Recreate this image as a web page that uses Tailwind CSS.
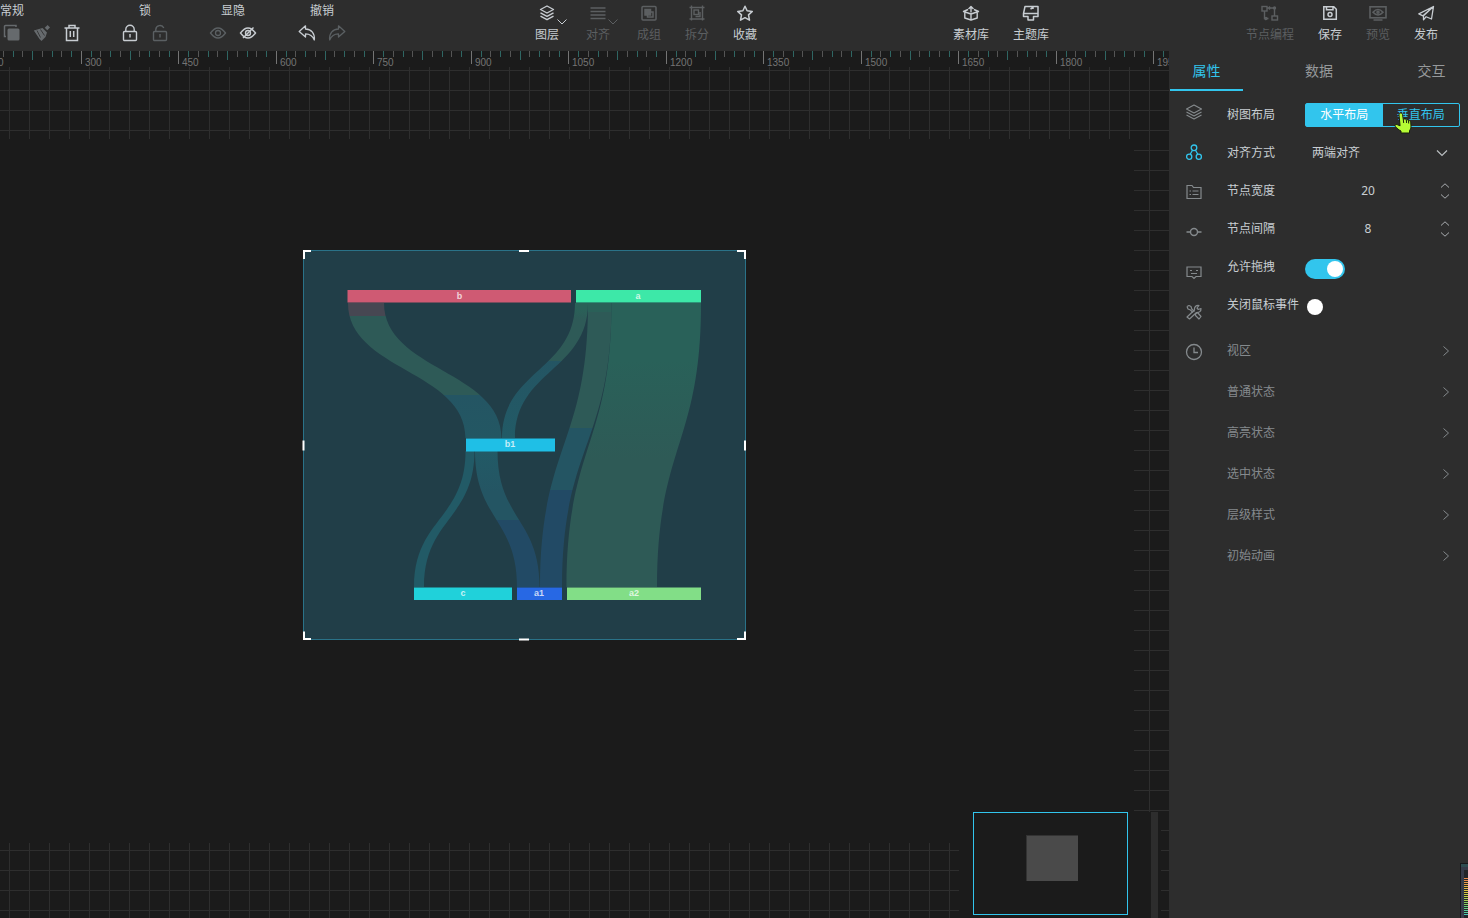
<!DOCTYPE html>
<html lang="zh-CN">
<head>
  <meta charset="UTF-8">
  <meta name="viewport" content="width=device-width, initial-scale=1.0">
  <title>大屏编辑器</title>
  <script src="https://cdn.jsdelivr.net/npm/@tailwindcss/browser@4"></script>
</head>
<body class="h-screen flex flex-col overflow-hidden bg-[#1b1b1b] text-xs text-[#c8cdd2] font-['Liberation_Sans','Noto_Sans_CJK_SC',sans-serif]">

  <!-- 顶部工具栏 -->
  <header class="h-[51px] shrink-0 flex bg-[#2d2d2d] overflow-hidden">
    <div class="flex gap-7 shrink-0 -ml-[63px]">
      <div class="w-[150px] flex flex-col items-center pt-[3px] gap-[5px]">
        <span class="leading-4">常规</span>
        <div class="w-full flex justify-end">
          <button class="w-[30px] h-[18px] grid place-items-center text-[#666a6d]" aria-label="复制">
            <svg class="w-[18px] h-[18px]" viewBox="0 0 18 18" fill="none"><path d="M13 3V1.500H2.500a1 1 0 0 0-1 1V12.500H3" stroke="currentColor" stroke-width="1.500"/><rect x="4.500" y="4.500" width="12" height="12" rx="1.500" fill="currentColor"/></svg>
          </button>
          <button class="w-[30px] h-[18px] grid place-items-center text-[#666a6d]" aria-label="清理">
            <svg class="w-[18px] h-[18px]" viewBox="0 0 18 18" fill="none"><path d="M.8 6.500 9.500 4l4.500 4.500-1.500 4.500-4 4-2-2z" fill="currentColor"/><path d="m13 5 2.800-2.800" stroke="currentColor" stroke-width="3.500"/><path d="m4 6.500 3.500 7M7.500 5.500l4 6" stroke="#2d2d2d" stroke-width=".8"/></svg>
          </button>
          <button class="w-[30px] h-[18px] grid place-items-center" aria-label="删除">
            <svg class="w-[18px] h-[18px]" viewBox="0 0 18 18" fill="none" stroke="currentColor" stroke-width="1.500"><path d="M1.500 4h15M6 3.500V1.500h6v2M3.500 4v12.500h11V4M7.300 7v6M10.700 7v6"/></svg>
          </button>
        </div>
      </div>
      <div class="flex flex-col items-center pt-[3px] gap-[5px]">
        <span class="leading-4">锁</span>
        <div class="flex">
          <button class="w-[30px] h-[18px] grid place-items-center" aria-label="锁定">
            <svg class="w-[18px] h-[18px]" viewBox="0 0 18 18" fill="none" stroke="currentColor" stroke-width="1.400"><rect x="2.500" y="7.500" width="13" height="9" rx="1"/><path d="M4.800 7V5.500a4.200 4.200 0 0 1 8.400 0V7M9 10v3.500"/></svg>
          </button>
          <button class="w-[30px] h-[18px] grid place-items-center text-[#5b6063]" aria-label="解锁">
            <svg class="w-[18px] h-[18px]" viewBox="0 0 18 18" fill="none" stroke="currentColor" stroke-width="1.400"><rect x="2.500" y="7.500" width="13" height="9" rx="1"/><path d="M4.800 7V5.500a4.200 4.200 0 0 1 8-1.500M9 10v3.500"/></svg>
          </button>
        </div>
      </div>
      <div class="flex flex-col items-center pt-[3px] gap-[5px]">
        <span class="leading-4">显隐</span>
        <div class="flex">
          <button class="w-[30px] h-[18px] grid place-items-center text-[#5b6063]" aria-label="显示">
            <svg class="w-[18px] h-[18px]" viewBox="0 0 18 18" fill="none" stroke="currentColor" stroke-width="1.300"><path d="M1.500 9q7.500-10 15 0q-7.500 10-15 0z"/><circle cx="9" cy="9" r="2.500"/></svg>
          </button>
          <button class="w-[30px] h-[18px] grid place-items-center" aria-label="隐藏">
            <svg class="w-[18px] h-[18px]" viewBox="0 0 18 18" fill="none" stroke="currentColor" stroke-width="1.400"><path d="M1.500 9q7.500-10 15 0q-7.500 10-15 0z"/><circle cx="9" cy="9" r="2.500"/><path d="M4 14 14.500 3.500"/></svg>
          </button>
        </div>
      </div>
      <div class="flex flex-col items-center pt-[3px] gap-[5px] pl-px">
        <span class="leading-4">撤销</span>
        <div class="flex">
          <button class="w-[30px] h-[18px] grid place-items-center" aria-label="撤销">
            <svg class="w-[18px] h-[18px]" viewBox="0 0 18 18" fill="none" stroke="currentColor" stroke-width="1.300" stroke-linejoin="round"><path d="M7.500 1.800 1.200 7.500l6.300 5.500V9.800c4.500 0 7 1.500 8.800 6.200C17 9.500 13.500 5.300 7.500 5z"/></svg>
          </button>
          <button class="w-[30px] h-[18px] grid place-items-center text-[#5b6063]" aria-label="重做">
            <svg class="w-[18px] h-[18px]" viewBox="0 0 18 18" fill="none" stroke="currentColor" stroke-width="1.300" stroke-linejoin="round"><path d="M10.500 1.800 16.800 7.500l-6.300 5.500V9.800c-4.500 0-7 1.500-8.800 6.200C1 9.500 4.500 5.300 10.500 5z"/></svg>
          </button>
        </div>
      </div>
    </div>

    <div class="flex gap-6 shrink-0 ml-[183px] pt-1">
      <button class="relative flex flex-col items-center gap-[5px] mr-[3px]">
        <svg class="w-[18px] h-[18px]" viewBox="0 0 18 18" fill="none" stroke="currentColor" stroke-width="1.400" stroke-linejoin="round"><path d="M9 2 15.500 5.500 9 9 2.500 5.500z"/><path d="M2.500 8.800 9 12.300l6.500-3.500M2.500 12.200 9 15.700l6.500-3.500"/></svg>
        <span class="leading-4">图层</span>
        <svg class="absolute left-[22px] top-[15px] w-2.5 h-1.5" viewBox="0 0 10 6" fill="none" stroke="currentColor"><path d="M.5.5 5 5 9.500.5"/></svg>
      </button>
      <button class="relative flex flex-col items-center gap-[5px] mr-[3px] text-[#5c5f61]">
        <svg class="w-[18px] h-[18px]" viewBox="0 0 18 18" fill="none" stroke="currentColor" stroke-width="1.500"><path d="M1.500 4h15M1.500 7.500h15M1.500 11h15M1.500 14.500h15"/></svg>
        <span class="leading-4">对齐</span>
        <svg class="absolute left-[22px] top-[15px] w-2.5 h-1.5" viewBox="0 0 10 6" fill="none" stroke="currentColor"><path d="M.5.5 5 5 9.500.5"/></svg>
      </button>
      <button class="flex flex-col items-center gap-[5px] text-[#5c5f61]">
        <svg class="w-[18px] h-[18px]" viewBox="0 0 18 18" fill="none" stroke="currentColor" stroke-width="1.500"><rect x="2" y="2.500" width="14" height="13.500" rx="1"/><rect x="5" y="5.500" width="5.500" height="5.500" fill="currentColor"/><rect x="7.500" y="8" width="5.500" height="5"/></svg>
        <span class="leading-4">成组</span>
      </button>
      <button class="flex flex-col items-center gap-[5px] text-[#5c5f61]">
        <svg class="w-[18px] h-[18px]" viewBox="0 0 18 18" fill="none" stroke="currentColor" stroke-width="1.400"><path d="M3.500 1.500v15M14.500 1.500v15M1.500 3.500h15M1.500 15h15"/><rect x="6" y="6" width="4.500" height="4.500"/><path d="M12 8v4.500H7.500"/></svg>
        <span class="leading-4">拆分</span>
      </button>
      <button class="flex flex-col items-center gap-[5px]">
        <svg class="w-[18px] h-[18px]" viewBox="0 0 18 18" fill="none" stroke="currentColor" stroke-width="1.500" stroke-linejoin="round"><path d="m9 2.200 2.100 4.600 5.200.6-3.800 3.500 1 5.300L9 13.700l-4.500 2.500 1-5.300-3.800-3.500 5.200-.6z"/></svg>
        <span class="leading-4">收藏</span>
      </button>
    </div>

    <div class="flex gap-6 shrink-0 ml-[196px] pt-1">
      <button class="flex flex-col items-center gap-[5px]">
        <svg class="w-[18px] h-[18px]" viewBox="0 0 18 18" fill="none" stroke="currentColor" stroke-width="1.400" stroke-linejoin="round"><path d="M6 5.500 1.500 7.500 9 10l7.500-2.500L12 5.500M2.800 8.500V14L9 16l6.200-2V8.500M9 10v6M9 8.500V2.500M6.500 5 9 2.500 11.500 5"/></svg>
        <span class="leading-4">素材库</span>
      </button>
      <button class="flex flex-col items-center gap-[5px]">
        <svg class="w-[18px] h-[18px]" viewBox="0 0 18 18" fill="none" stroke="currentColor" stroke-width="1.500" stroke-linejoin="round"><path d="M3 2.500h13v7H1.500zM1.500 9.500v3H6v3.500h5.500v-3.500H16V9.500M11 5V2.500M8.500 5 11 3.500"/></svg>
        <span class="leading-4">主题库</span>
      </button>
    </div>

    <div class="flex gap-6 shrink-0 ml-auto mr-[30px] pt-1">
      <button class="flex flex-col items-center gap-[5px] text-[#5c5f61]">
        <svg class="w-[18px] h-[18px]" viewBox="0 0 18 18" fill="none" stroke="currentColor" stroke-width="1.400"><rect x="1" y="2.500" width="5" height="4.500"/><rect x="11" y="12" width="5.500" height="4"/><path d="M6 4h7.500v8M3.500 7v7.500h4M9 2.500 7.500 4 9 5.500"/><circle cx="13.500" cy="4" r="1" fill="currentColor"/><circle cx="5" cy="14.500" r="1" fill="currentColor"/></svg>
        <span class="leading-4">节点编程</span>
      </button>
      <button class="flex flex-col items-center gap-[5px]">
        <svg class="w-[18px] h-[18px]" viewBox="0 0 18 18" fill="none" stroke="currentColor" stroke-width="1.500"><path d="M2.800 2.800h10l2.500 2.500v9.900H2.800zM5.500 2.800v3h6.500v-3"/><circle cx="9" cy="10.500" r="2"/></svg>
        <span class="leading-4">保存</span>
      </button>
      <button class="flex flex-col items-center gap-[5px] text-[#5c5f61]">
        <svg class="w-[18px] h-[18px]" viewBox="0 0 18 18" fill="none" stroke="currentColor" stroke-width="1.600"><rect x="1" y="2.800" width="16" height="11"/><path d="M4 8.300q5-5.500 10 0q-5 5.500-10 0zM4.500 16h9"/><circle cx="9" cy="8.300" r="1"/></svg>
        <span class="leading-4">预览</span>
      </button>
      <button class="flex flex-col items-center gap-[5px]">
        <svg class="w-[18px] h-[18px]" viewBox="0 0 18 18" fill="none" stroke="currentColor" stroke-width="1.300" stroke-linejoin="round"><path d="M16.500 2.500 1.800 9.800 6 11.800zM16.500 2.500 6.500 11.800V15.800l2.500-2.900M16.500 2.500 14.500 15 8.500 12.500"/></svg>
        <span class="leading-4">发布</span>
      </button>
    </div>
  </header>

  <div class="flex-1 min-h-0 flex">
    <!-- 画布 -->
    <main class="relative flex-1 min-w-0 overflow-hidden">
      <svg class="absolute inset-0 w-full h-full">
        <defs>
          <pattern id="grid" width="20" height="20" x="9" y="19" patternUnits="userSpaceOnUse"><path d="M0 .5H20M.5 0V20" stroke="#2e2e2e"/></pattern>
        </defs>
        <rect y="16" width="100%" height="100%" fill="url(#grid)"/>
        <g id="ruler" font-size="10" fill="#747474"></g>
      </svg>
      <div class="absolute left-0 top-[88px] right-[35px] bottom-[75px] bg-[#1b1b1b]"></div>

      <!-- 选中的桑基图组件 -->
      <svg class="absolute left-[302px] top-[198px] w-[445px] h-[393px]" viewBox="302 249 445 393" role="img" aria-label="桑基图">
        <defs>
          <linearGradient id="b-b1" gradientUnits="userSpaceOnUse" x1="0" y1="303" x2="0" y2="438">
            <stop offset=".096" stop-color="#474752"/><stop offset=".096" stop-color="#2e5a57"/><stop offset=".68" stop-color="#2e5a57"/><stop offset=".68" stop-color="#245563"/><stop offset="1" stop-color="#235763"/>
          </linearGradient>
          <linearGradient id="a-b1" gradientUnits="userSpaceOnUse" x1="0" y1="303" x2="0" y2="438">
            <stop offset=".05" stop-color="#2a6058"/><stop offset=".12" stop-color="#2e5a57"/><stop offset=".43" stop-color="#2e5a57"/><stop offset=".43" stop-color="#245563"/><stop offset="1" stop-color="#225a66"/>
          </linearGradient>
          <linearGradient id="a-a1" gradientUnits="userSpaceOnUse" x1="0" y1="303" x2="0" y2="587">
            <stop offset=".03" stop-color="#2a6058"/><stop offset=".03" stop-color="#2e5a57"/><stop offset=".44" stop-color="#2e5a57"/><stop offset=".44" stop-color="#245563"/><stop offset=".66" stop-color="#245563"/><stop offset=".66" stop-color="#224a65"/>
          </linearGradient>
          <linearGradient id="a-a2" gradientUnits="userSpaceOnUse" x1="0" y1="303" x2="0" y2="587">
            <stop offset=".2" stop-color="#296159"/><stop offset=".55" stop-color="#2e5a56"/>
          </linearGradient>
          <linearGradient id="b1-a1" gradientUnits="userSpaceOnUse" x1="0" y1="451" x2="0" y2="587">
            <stop offset="0" stop-color="#225a66"/><stop offset=".3" stop-color="#245563"/><stop offset=".51" stop-color="#245563"/><stop offset=".51" stop-color="#224a65"/>
          </linearGradient>
        </defs>
        <rect x="303.500" y="250.500" width="442" height="389" fill="#213e48" stroke="#2a7288"/>
        <path d="M348 303C348 370.500 465.500 370.500 465.500 438H501.500C501.500 370.500 384 370.500 384 303z" fill="url(#b-b1)"/>
        <path d="M575 303C575 370.500 502 370.500 502 438H515C515 370.500 588 370.500 588 303z" fill="url(#a-b1)"/>
        <path d="M588 303C588 445 540 445 540 587H562C562 445 611.500 445 611.500 303z" fill="url(#a-a1)"/>
        <path d="M611.500 303C611.500 445 566.500 445 566.500 587H657C657 445 701 445 701 303z" fill="url(#a-a2)"/>
        <path d="M465.500 451C465.500 519 414 519 414 587H424C424 519 474.500 519 474.500 451z" fill="#225a66"/>
        <path d="M475 451C475 519 517 519 517 587H539.500C539.500 519 497.500 519 497.500 451z" fill="url(#b1-a1)"/>
        <rect x="347.500" y="290" width="223.500" height="12.500" fill="#cf5a73"/>
        <rect x="576" y="290" width="125" height="12.500" fill="#3de8a8"/>
        <rect x="466" y="438.500" width="89" height="13" fill="#1fbfe6"/>
        <rect x="414" y="587.500" width="98" height="12.500" fill="#20d1da"/>
        <rect x="517" y="587.500" width="45" height="12.500" fill="#2768e4"/>
        <rect x="567" y="587.500" width="134" height="12.500" fill="#82de87"/>
        <g font-size="9" font-weight="bold" fill="#ffffff" fill-opacity=".75" text-anchor="middle">
          <text x="459.500" y="299">b</text>
          <text x="638" y="299">a</text>
          <text x="510" y="447">b1</text>
          <text x="463" y="596">c</text>
          <text x="539" y="596">a1</text>
          <text x="634" y="596">a2</text>
        </g>
        <g fill="none" stroke="#ffffff" stroke-width="2">
          <path d="M311 251H304V259M737 251H745V259M311 639H304V631.500M737 639H745V631.500"/>
          <path d="M519 251H529M519 639.500H529M303.500 440.500V450.500M745 440.500V450.500"/>
        </g>
      </svg>

      <!-- 缩略图 -->
      <div class="absolute right-2 bottom-0 flex items-start justify-between w-[202px] h-[106px] pl-[14px] pr-[3px] bg-[#1b1b1b]">
        <div class="w-[155px] h-[103px] border border-[#32c5ed] pl-[52px] pt-[22px]">
          <div class="w-[52px] h-[46px] bg-[#4a4a4a] border-t border-l border-[#333333]"></div>
        </div>
        <div class="w-[7px] h-full bg-[#2d2d2d]"></div>
      </div>
    </main>

    <!-- 属性面板 -->
    <aside class="relative w-[299px] shrink-0 bg-[#2d2d2d]">
      <nav class="h-10 flex justify-between pl-px text-sm text-[#96999b]">
        <button class="w-[73px] pt-0.5 border-b-2 border-[#32c5ed] text-[#32c5ed]">属性</button>
        <button class="w-[73px] pt-0.5 border-b-2 border-transparent">数据</button>
        <button class="w-[73px] pt-0.5 border-b-2 border-transparent">交互</button>
      </nav>

      <div class="flex">
        <div class="w-[49px] shrink-0 flex flex-col pt-px text-[#858a8d]">
          <button class="h-10 grid place-items-center" aria-label="图层">
            <svg class="w-[18px] h-[18px]" viewBox="0 0 18 18" fill="none" stroke="currentColor" stroke-width="1.100" stroke-linejoin="round"><path d="M9 2 16.500 6 9 10 1.500 6z"/><path d="M1.500 9 9 13l7.500-4M1.500 12 9 16l7.500-4"/></svg>
          </button>
          <button class="h-10 grid place-items-center text-[#32c5ed]" aria-label="布局">
            <svg class="w-[18px] h-[18px]" viewBox="0 0 18 18" fill="none" stroke="currentColor" stroke-width="1.300"><circle cx="9" cy="4.800" r="2.800"/><circle cx="4.200" cy="13.700" r="2.600"/><circle cx="13.800" cy="13.700" r="2.600"/><path d="M7.500 7.200 5.200 11.200M10.500 7.200l2.300 4"/></svg>
          </button>
          <button class="h-10 grid place-items-center" aria-label="标签">
            <svg class="w-[18px] h-[18px]" viewBox="0 0 18 18" fill="none" stroke="currentColor" stroke-width="1.200"><path d="M2 15.500v-13h5l1.500 2h7.500v11zM4.500 8H6M7.500 8h6M4.500 11.500H6M7.500 11.500h6"/></svg>
          </button>
          <button class="h-10 grid place-items-center" aria-label="节点">
            <svg class="w-[18px] h-[18px]" viewBox="0 0 18 18" fill="none" stroke="currentColor" stroke-width="1.400"><circle cx="9" cy="9" r="3.500"/><path d="M1.500 9h4M12.500 9h4"/></svg>
          </button>
          <button class="h-10 grid place-items-center" aria-label="提示">
            <svg class="w-[18px] h-[18px]" viewBox="0 0 18 18" fill="none" stroke="currentColor" stroke-width="1.200"><path d="M2 4h14v9.500h-5L9 15.500 7 13.500H2zM5 7.500h2M11 7.500h2M6 10.500h6"/></svg>
          </button>
          <button class="h-10 grid place-items-center" aria-label="工具">
            <svg class="w-[18px] h-[18px]" viewBox="0 0 18 18" fill="none" stroke="currentColor" stroke-width="1.200" stroke-linejoin="round"><path d="M2 3.500 4 2.500l2 1 .8 2.500 2.700 2.500M2 3.500l1 2.500 2.500 1L8 9.500M10.500 11l2-1.500 3.500 4-2 2.500-3.500-3.500z"/><path d="m4.500 16-2.500-2 7.500-7c-.5-2.800 1.500-5 4.500-4.500L12 5l1.300 1.500L16 5.500c.2 2.800-1.800 4.300-4.500 4z"/></svg>
          </button>
          <button class="h-10 grid place-items-center" aria-label="历史">
            <svg class="w-[18px] h-[18px]" viewBox="0 0 18 18" fill="none" stroke="currentColor" stroke-width="1.300"><circle cx="9" cy="9" r="7.500"/><path d="M9 4.500V9.500h4"/></svg>
          </button>
        </div>

        <div class="flex-1 min-w-0 pl-[9px] pt-[5px] pr-2">
          <div class="h-[38px] flex items-center">
            <span class="w-[78px] shrink-0">树图布局</span>
            <div class="flex-1 flex h-6 border border-[#32c5ed] rounded-xs text-[#32c5ed]">
              <button class="flex-1 bg-[#32c5ed] text-white">水平布局</button>
              <button class="flex-1">垂直布局</button>
            </div>
          </div>
          <div class="h-[38px] flex items-center">
            <label class="w-[78px] shrink-0" for="align">对齐方式</label>
            <div class="flex-1 relative">
              <select id="align" class="w-full h-7 pl-[7px] appearance-none bg-transparent">
                <option>两端对齐</option>
              </select>
              <svg class="absolute right-3 top-2.5 w-3 h-2 pointer-events-none" viewBox="0 0 12 8" fill="none" stroke="#b9bdc0" stroke-width="1.200"><path d="M1 1.500 6 6.500 11 1.500"/></svg>
            </div>
          </div>
          <div class="h-[38px] flex items-center">
            <label class="w-[78px] shrink-0" for="node-width">节点宽度</label>
            <input id="node-width" class="w-[126px] h-6 pb-0.5 bg-transparent text-center font-['Noto_Sans',sans-serif]" type="text" value="20">
            <button class="ml-auto mr-2.5" aria-label="调整宽度">
              <svg class="w-2.5 h-4" viewBox="0 0 10 16" fill="none" stroke="#a9adb0"><path d="M1 4.500 5 .8l4 3.700M1 11.500l4 3.700 4-3.700"/></svg>
            </button>
          </div>
          <div class="h-[38px] flex items-center">
            <label class="w-[78px] shrink-0" for="node-gap">节点间隔</label>
            <input id="node-gap" class="w-[126px] h-6 pb-0.5 bg-transparent text-center font-['Noto_Sans',sans-serif]" type="text" value="8">
            <button class="ml-auto mr-2.5" aria-label="调整间隔">
              <svg class="w-2.5 h-4" viewBox="0 0 10 16" fill="none" stroke="#a9adb0"><path d="M1 4.500 5 .8l4 3.700M1 11.500l4 3.700 4-3.700"/></svg>
            </button>
          </div>
          <div class="h-[38px] flex items-center">
            <label class="w-[78px] shrink-0" for="draggable">允许拖拽</label>
            <input id="draggable" type="checkbox" role="switch" checked class="appearance-none mt-1 w-10 h-5 rounded-full checked:bg-[#32c5ed] before:block before:w-4 before:h-4 before:m-0.5 before:rounded-full before:bg-white checked:before:ml-[22px]">
          </div>
          <div class="h-[38px] flex items-center">
            <label class="w-[78px] shrink-0" for="no-mouse">关闭鼠标事件</label>
            <input id="no-mouse" type="checkbox" role="switch" class="appearance-none mt-1 w-10 h-5 rounded-full checked:bg-[#32c5ed] before:block before:w-4 before:h-4 before:m-0.5 before:rounded-full before:bg-white checked:before:ml-[22px]">
          </div>

          <div class="mt-1.5 flex flex-col text-[#858a8d]">
            <button class="h-[41px] flex items-center justify-between pr-2.5">视区
              <svg class="w-2 h-3" viewBox="0 0 8 12" fill="none" stroke="currentColor"><path d="M1.500 1.500 6.500 6 1.500 10.500"/></svg></button>
            <button class="h-[41px] flex items-center justify-between pr-2.5">普通状态
              <svg class="w-2 h-3" viewBox="0 0 8 12" fill="none" stroke="currentColor"><path d="M1.500 1.500 6.500 6 1.500 10.500"/></svg></button>
            <button class="h-[41px] flex items-center justify-between pr-2.5">高亮状态
              <svg class="w-2 h-3" viewBox="0 0 8 12" fill="none" stroke="currentColor"><path d="M1.500 1.500 6.500 6 1.500 10.500"/></svg></button>
            <button class="h-[41px] flex items-center justify-between pr-2.5">选中状态
              <svg class="w-2 h-3" viewBox="0 0 8 12" fill="none" stroke="currentColor"><path d="M1.500 1.500 6.500 6 1.500 10.500"/></svg></button>
            <button class="h-[41px] flex items-center justify-between pr-2.5">层级样式
              <svg class="w-2 h-3" viewBox="0 0 8 12" fill="none" stroke="currentColor"><path d="M1.500 1.500 6.500 6 1.500 10.500"/></svg></button>
            <button class="h-[41px] flex items-center justify-between pr-2.5">初始动画
              <svg class="w-2 h-3" viewBox="0 0 8 12" fill="none" stroke="currentColor"><path d="M1.500 1.500 6.500 6 1.500 10.500"/></svg></button>
          </div>
        </div>
      </div>

      <!-- 鼠标指针 -->
      <svg class="absolute right-[56px] top-[61px] w-[18px] h-[22px] pointer-events-none" viewBox="0 0 18 22"><path d="M6.500 1c1.200-.2 1.800.5 2 1.500l.8 5 1-.5c1-.3 1.700.1 2 .9.900-.5 1.900-.1 2.200.8 1.200-.3 2 .3 2.200 1.400l.3 4c0 2.200-.7 3.500-1.500 4.500v2.400H7v-2C4.800 18 3 16.300 1.200 14.300c-.6-1.300.6-2.300 1.900-1.700l3 1.200L5 3c0-1.200.500-1.800 1.500-2z" fill="#b5fb35" stroke="#17200a"/><path d="m9.300 7.500.4 3.500M12.300 8l.3 3M14.500 8.800l.2 2.700" stroke="#17200a" fill="none"/></svg>

      <!-- 音量指示 -->
      <svg class="absolute right-0 bottom-0 w-[8px] h-[55px]" viewBox="0 0 8 55">
        <rect width="8" height="55" fill="#17181a"/>
        <rect x="1" y="1" width="7" height="54" fill="#353a48"/>
        <rect x="1" y="1" width="7" height="3" fill="#2e4c50"/>
        <rect x="4" y="7" width="4" height="48" fill="#222428"/>
        <g id="meter"></g>
      </svg>
    </aside>
  </div>

  <script>
    const NS = 'http://www.w3.org/2000/svg';
    function add(parent, tag, attrs, text) {
      const el = document.createElementNS(NS, tag);
      for (const k in attrs) el.setAttribute(k, attrs[k]);
      if (text !== undefined) el.textContent = text;
      parent.appendChild(el);
    }

    // 标尺：每 15 个单位一个刻度，每 150 个单位一个数字
    const ruler = document.getElementById('ruler');
    for (let i = -9; i < 130; i++) {
      const x = Math.floor(81.3 + i * 9.75);
      const n = ((i % 10) + 10) % 10;
      add(ruler, 'rect', {
        x: x, y: 0, width: 1,
        height: n === 0 ? 13 : n === 5 ? 9 : 6,
        fill: n === 0 ? '#747474' : n % 2 ? '#2f6663' : '#555555'
      });
    }
    for (let v = 150; v <= 1950; v += 150) {
      add(ruler, 'text', { x: Math.floor(85.3 + (v - 300) * 0.65), y: 15 }, v);
    }

    const meter = document.getElementById('meter');
    const colors = ['#ea8b4a', '#e8a04a', '#e3b545', '#dcc63f', '#c9cf45', '#a9cf50', '#86cf60', '#68cf7c', '#52cc9c', '#45c6b8'];
    for (let i = 0; i < 19; i++) {
      add(meter, 'rect', { x: 4, y: 15 + i * 2, width: 4, height: 1, fill: colors[Math.floor(i / 2)] });
    }
  </script>
</body>
</html>
